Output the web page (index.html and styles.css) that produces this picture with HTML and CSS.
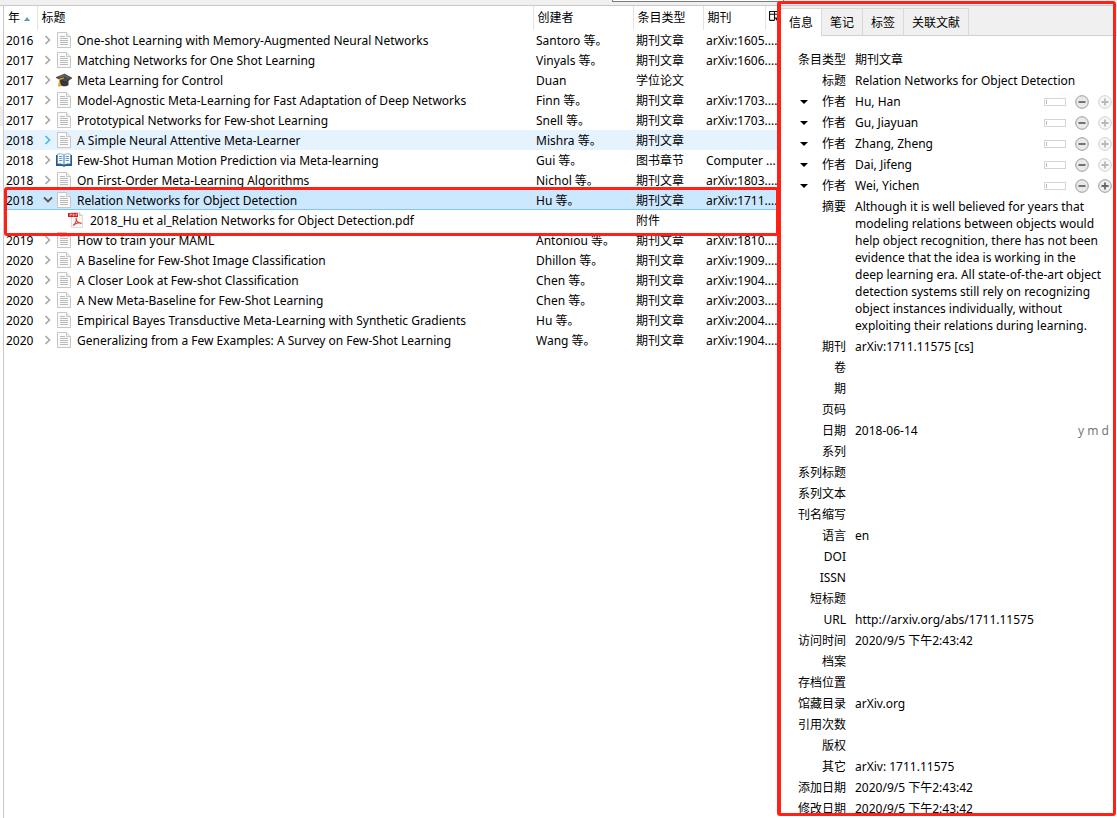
FILE: index.html
```
<!DOCTYPE html>
<html lang="zh-CN">
<head>
<meta charset="utf-8">
<title>Zotero</title>
<link rel="stylesheet" href="styles.css">
</head>
<body>
<svg class="defs" aria-hidden="true">
  <symbol id="doc" viewBox="0 0 16 16"><path d="M1.5.5h9l4 4v11h-13z" fill="#fbfbfb" stroke="#c6c6c6"/><path d="M10.5.5v4h4" fill="#eee" stroke="#c6c6c6"/><path d="M4 4.5h5M4 6.5h8M4 8.5h8M4 10.5h8M4 12.5h8" stroke="#b9b9b9"/></symbol>
  <symbol id="cap" viewBox="0 0 16 16"><path d="M3.5 8v4.500c2 2 7 2.500 9 .5V8" fill="#383838"/><path d="M0 5.500 8.500 2 16 6l-6.500 4.500z" fill="#494949" stroke="#252525" stroke-width=".5"/><path d="M3 5.500 8.500 3.500 13 6" fill="none" stroke="#888" stroke-width=".7"/><path d="M8 6 3.500 7.500v5" fill="none" stroke="#e5a82a" stroke-width="1.200"/><path d="M2.500 11h2l.5 3.500H2z" fill="#e9a620"/></symbol>
  <symbol id="book" viewBox="0 0 16 16"><path d="M0 3h16v11H9.500l-1.500 1-1.500-1H0z" fill="#235b91"/><path d="M1.500 2q4-1 6.500.8Q10.500 1 14.500 2v10q-4-.7-6.500 1-2.500-1.700-6.500-1z" fill="#f5fbff" stroke="#4e7da8" stroke-width=".6"/><path d="M8 3v10" stroke="#46749e"/><path d="M3 4.500h3.500M3 6.500h3.500M3 8.500h3.500M9.500 4.500H13M9.500 6.500H13M9.500 8.500H13" stroke="#679bc7"/></symbol>
  <symbol id="pdf" viewBox="0 0 16 16"><path d="M3.500.5h8l3 3v12h-11z" fill="#f7f7f7" stroke="#ddd"/><path d="M11.500.5v3h3" fill="#e7e7e7" stroke="#ccc"/><path d="M0 1h10v4H0z" fill="#e21b12"/><path d="M2 4V2h1.500v1H2M5 2v2h1V2zM8 4V2h1.500M8 3h1" fill="none" stroke="#fff" stroke-width=".5"/><path d="M5 13.500c2-1 4-5 3.300-7-1 1 1.700 5 4.700 4.700-1-1-5-.2-8 2.300z" fill="none" stroke="#e43a2d" stroke-width="1.100"/></symbol>
  <symbol id="right" viewBox="0 0 8 10"><path d="m1.500 1 4 4-4 4" fill="none" stroke="currentColor" stroke-width="1.600"/></symbol>
  <symbol id="down" viewBox="0 0 10 8"><path d="m1 1.500 4 4 4-4" fill="none" stroke="currentColor" stroke-width="1.800"/></symbol>
  <symbol id="minus" viewBox="0 0 14 14"><circle cx="7" cy="7" r="6.300" fill="#e9e9e9" stroke="#999"/><path d="M3.500 7h7" stroke="#666" stroke-width="1.800"/></symbol>
  <symbol id="plus" viewBox="0 0 14 14"><circle cx="7" cy="7" r="6.300" fill="#eee" stroke="#999"/><path d="M3.500 7h7M7 3.500v7" stroke="#666" stroke-width="1.800"/></symbol>
</svg>
<div class="toolbar"><div class="search-edge"></div></div>
<div class="app">
  <div class="splitter"><div class="thumb"></div></div>
  <main class="items">
    <table class="tree">
      <colgroup><col class="c-year"><col><col class="c-creator"><col class="c-type"><col class="c-journal"><col class="c-picker"></colgroup>
      <thead><tr>
        <th>年 <svg class="sort" viewBox="0 0 6 4"><path d="M0 4 3 0l3 4z" fill="#5d9ab9"/></svg></th><th>标题</th><th>创建者</th><th>条目类型</th><th>期刊</th>
        <th class="picker"><button class="pick" aria-label="选择列"><svg viewBox="0 0 10 10"><path d="M.5 8.500v-8h9v5M.5 3h9M5 .5v8M.5 8.500H5" fill="none" stroke="#111"/><path d="M5 6h5L7.500 9.500z" fill="#111"/></svg></button></th>
      </tr></thead>
      <tbody id="rows"></tbody>
    </table>
    <div class="mark row-mark"></div>
  </main>
  <aside class="pane">
    <div class="tabs" role="tablist"><button class="tab on" role="tab" aria-selected="true">信息</button><button class="tab" role="tab">笔记</button><button class="tab" role="tab">标签</button><button class="tab" role="tab">关联文献</button></div>
    <dl class="info" id="info"></dl>
    <div class="mark pane-mark"></div>
  </aside>
</div>
<script src="app.js"></script>
</body>
</html>
```
FILE: styles.css
```
* { box-sizing: border-box; }
body { margin: 0; height: 100vh; display: flex; flex-direction: column; overflow: hidden; background: #fff; color: #000; font: 12px/20px "Noto Sans", "Noto Sans CJK SC", sans-serif; }
button { font: inherit; color: inherit; border: 0; padding: 0; background: none; }
svg { display: block; flex: none; }
.defs { position: absolute; width: 0; height: 0; }
.toolbar { flex: none; height: 6px; background: #f0f0f0; border-bottom: 1px solid #c8c8c8; display: flex; justify-content: flex-end; }
.search-edge { width: 172px; height: 2px; margin-right: 333px; background: #fff; border: 1px solid #7a7a7a; border-top: 0; }
.app { flex: 1; min-height: 0; display: flex; }
.splitter { width: 4px; border-right: 1px solid #c8c8c8; padding-top: 100px; }
.thumb { height: 20px; background: #eee; }
.items { flex: 1; min-width: 0; position: relative; }
.tree { width: 100%; table-layout: fixed; border-collapse: collapse; }
.c-year { width: 33px; }
.c-creator { width: 100px; }
.c-type { width: 70px; }
.c-journal { width: 62px; }
.c-picker { width: 12px; }
th, td { padding: 0; text-align: left; font-weight: 400; white-space: nowrap; overflow: hidden; }
th { height: 24px; padding-left: 4px; border-right: 1px solid #e2e2e2; }
th.picker { padding-left: 3px; border: 0; }
.sort { display: inline-block; width: 6px; height: 4px; margin-left: 1px; vertical-align: middle; }
.pick svg { width: 11px; height: 11px; }
td { height: 20px; padding-left: 3px; line-height: 19px; }
td:first-child { padding-left: 2px; }
.title { display: flex; align-items: center; height: 19px; padding-left: 3px; gap: 3px; }
.twisty { width: 10px; height: 10px; color: #a6a6a6; }
.icon { width: 16px; height: 16px; }
.title span { padding-left: 2px; }
.title.child { padding-left: 28px; }
.title.child span { padding-left: 3px; }
.hover { background: #e5f3ff; }
.hover .twisty { color: #36bdf2; }
.selected { background: #cce8ff; box-shadow: inset 0 -1px #84c5f5; }
.selected .twisty { color: #555; }
.mark { position: absolute; pointer-events: none; border: 3px solid #ff2116; border-radius: 3px; }
.row-mark { top: 181px; left: 0; right: -2px; height: 49px; }
.pane { width: 340px; position: relative; border-left: 4px solid #fff; display: flex; flex-direction: column; padding-bottom: 3px; }
.pane-mark { top: -5px; bottom: 2px; left: -4px; right: 1px; border-width: 4px; border-top-width: 3px; border-bottom-width: 3px; border-right-width: 3px; }
.tabs { flex: none; height: 30px; padding-top: 2px; background: #f0f0f0; border-bottom: 1px solid #d0d0d0; display: flex; }
.tab { height: 27px; padding: 0 8px; border: 1px solid #d9d9d9; border-left: 0; border-bottom: 0; line-height: 23px; }
.tab.on { height: 28px; background: #fff; }
.info { flex: 1; min-height: 0; overflow: hidden; margin: 0; padding: 13px 5px 0 9px; }
.field { display: flex; min-height: 21px; padding: 2px 0; line-height: 17px; }
.field dt { flex: none; width: 56px; text-align: right; display: flex; justify-content: flex-end; align-items: flex-start; }
.field dd { flex: 1; min-width: 0; margin: 0 0 0 9px; display: flex; gap: 9px; align-items: center; }
.caret { width: 8px; height: 17px; margin-right: auto; margin-left: 10px; display: flex; align-items: center; }
.caret svg { width: 8px; height: 4px; }
.value { flex: 1; min-width: 0; padding-right: 7px; }
.ymd { color: #777; padding-right: 3px; }
.mode { width: 22px; height: 8px; border: 1px solid #d5d5d5; background: linear-gradient(#bbb, #bbb) 1px 1px / 1px 4px no-repeat #fff; }
.round { width: 14px; height: 14px; }
.round svg { width: 14px; height: 14px; }
.round:disabled { opacity: .45; }
```
FILE: app.js
```
const J = '期刊文章';
const items = [
  [2016, 'One-shot Learning with Memory-Augmented Neural Networks', 'Santoro 等。', J, 'arXiv:1605....'],
  [2017, 'Matching Networks for One Shot Learning', 'Vinyals 等。', J, 'arXiv:1606....'],
  [2017, 'Meta Learning for Control', 'Duan', '学位论文', '', 'cap'],
  [2017, 'Model-Agnostic Meta-Learning for Fast Adaptation of Deep Networks', 'Finn 等。', J, 'arXiv:1703....'],
  [2017, 'Prototypical Networks for Few-shot Learning', 'Snell 等。', J, 'arXiv:1703....'],
  [2018, 'A Simple Neural Attentive Meta-Learner', 'Mishra 等。', J, '', 'doc', 'hover'],
  [2018, 'Few-Shot Human Motion Prediction via Meta-learning', 'Gui 等。', '图书章节', 'Computer ...', 'book'],
  [2018, 'On First-Order Meta-Learning Algorithms', 'Nichol 等。', J, 'arXiv:1803....'],
  [2018, 'Relation Networks for Object Detection', 'Hu 等。', J, 'arXiv:1711....', 'doc', 'selected'],
  ['', '2018_Hu et al_Relation Networks for Object Detection.pdf', '', '附件', '', 'pdf', 'attachment'],
  [2019, 'How to train your MAML', 'Antoniou 等。', J, 'arXiv:1810....'],
  [2020, 'A Baseline for Few-Shot Image Classification', 'Dhillon 等。', J, 'arXiv:1909....'],
  [2020, 'A Closer Look at Few-shot Classification', 'Chen 等。', J, 'arXiv:1904....'],
  [2020, 'A New Meta-Baseline for Few-Shot Learning', 'Chen 等。', J, 'arXiv:2003....'],
  [2020, 'Empirical Bayes Transductive Meta-Learning with Synthetic Gradients', 'Hu 等。', J, 'arXiv:2004....'],
  [2020, 'Generalizing from a Few Examples: A Survey on Few-Shot Learning', 'Wang 等。', J, 'arXiv:1904....']
];
const use = (id, cls = '') => `<svg class="${cls}"><use href="#${id}"/></svg>`;
document.getElementById('rows').innerHTML = items.map(([y, t, c, k, j, icon = 'doc', state = '']) => {
  const child = state === 'attachment';
  const twisty = child ? '' : use(state === 'selected' ? 'down' : 'right', 'twisty');
  return `<tr class="${state}"><td>${y}</td><td><div class="title ${child ? 'child' : ''}">${twisty}${use(icon, 'icon')}<span>${t}</span></div></td><td>${c}</td><td>${k}</td><td colspan="2">${j}</td></tr>`;
}).join('');

const abstract = 'Although it is well believed for years that modeling relations between objects would help object recognition, there has not been evidence that the idea is working in the deep learning era. All state-of-the-art object detection systems still rely on recognizing object instances individually, without exploiting their relations during learning.';
const authors = ['Hu, Han', 'Gu, Jiayuan', 'Zhang, Zheng', 'Dai, Jifeng', 'Wei, Yichen'];
const fields = [
  ['条目类型', J], ['标题', 'Relation Networks for Object Detection'],
  ...authors.map(a => ['作者', a]),
  ['摘要', abstract], ['期刊', 'arXiv:1711.11575 [cs]'], ['卷'], ['期'], ['页码'], ['日期', '2018-06-14'],
  ['系列'], ['系列标题'], ['系列文本'], ['刊名缩写'], ['语言', 'en'], ['DOI'], ['ISSN'], ['短标题'],
  ['URL', '<span>http://arxiv.org/abs/1711.11575</span>'], ['访问时间', '2020/9/5 下午2:43:42'], ['档案'], ['存档位置'],
  ['馆藏目录', 'arXiv.org'], ['引用次数'], ['版权'], ['其它', 'arXiv: 1711.11575'],
  ['添加日期', '2020/9/5 下午2:43:42'], ['修改日期', '2020/9/5 下午2:43:42']
];
document.getElementById('info').innerHTML = fields.map(([label, value = '']) => {
  const author = label === '作者';
  const last = value === authors[authors.length - 1];
  const caret = author ? '<button class="caret" aria-label="创建者类型"><svg viewBox="0 0 8 4"><path d="M0 0h8L4 4z"/></svg></button>' : '';
  const extra = author
    ? `<button class="mode" aria-label="切换姓名格式"></button><button class="round" aria-label="移除">${use('minus')}</button><button class="round" aria-label="添加" ${last ? '' : 'disabled'}>${use('plus')}</button>`
    : label === '日期' ? '<span class="ymd">y m d</span>' : '';
  return `<div class="field"><dt>${caret}${label}</dt><dd><span class="value">${value}</span>${extra}</dd></div>`;
}).join('');
```
